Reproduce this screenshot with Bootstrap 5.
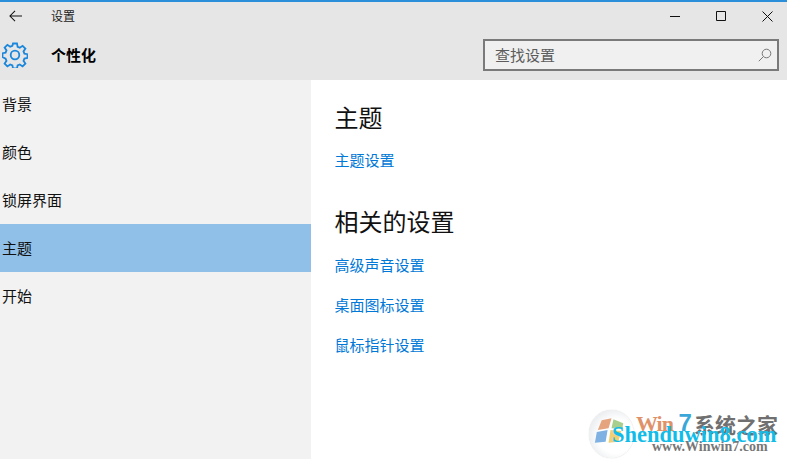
<!DOCTYPE html>
<html lang="zh-CN">
<head>
<meta charset="utf-8">
<title>设置</title>
<link href="https://cdn.jsdelivr.net/npm/bootstrap@5.3.0/dist/css/bootstrap.min.css" rel="stylesheet">
<style>
html,body{height:100%;overflow:hidden}
body{font-family:"Noto Sans CJK SC","Liberation Sans",sans-serif;background:#fff;color:#000;position:relative}
.app-head{background:#e6e6e6;border-top:2px solid #2b90d9;height:80px;flex:none}
.title-row{height:28px;padding-left:9px}
.title-row .ttl{font-size:12px;margin-left:29px;color:#222}
.win-btns{margin-left:auto;gap:36px;padding-right:14px}
.page-row{height:50px;padding-right:8px;padding-left:2px}
.page-name{font-size:15px;font-weight:700;margin-left:23px;line-height:20px}
.find-box{width:296px;height:32px;margin-left:auto;margin-top:-1px;border:2px solid #7a7a7a;background:#f0f0f0;padding:0 5px 0 10px;font-size:15px;color:#5c5c5c}
.find-box span{line-height:20px}
.body-row{height:379px}
.side-col{width:311px;background:#f2f2f2;flex:none}
.side-item{height:48px;padding-left:2px;font-size:15px;color:#111}
.side-item span{line-height:20px}
.side-item.on{background:#90c0e8}
.main-col{padding:0 0 0 23.5px}
.sec-title{font-size:24px;font-weight:400;line-height:32px;margin:0;color:#111}
.set-link{display:block;font-size:15px;line-height:20px;color:#0078d7;text-decoration:none}
.t1{margin-top:21px}
.l1{margin-top:17px}
.t2{margin-top:35px}
.l2{margin-top:18px}
.l3{margin-top:20px}
.wm{position:absolute;left:588px;top:408px;width:199px;height:51px;pointer-events:none}
.wm-ball{position:absolute;left:1px;top:2px;width:45px;height:48px;border-radius:50%;background:radial-gradient(circle at 60% 55%,#fff 45%,#d9dde2 100%);box-shadow:0 0 1px #bbb}
.wm-a{position:absolute;left:48px;top:3px;font:700 22px/24px "Liberation Serif",serif;color:#df9268;white-space:nowrap;letter-spacing:-1px}
.wm-a b{color:#3aa7d8;font:700 24px/24px "Liberation Sans",sans-serif}
.wm-cn{position:absolute;left:106px;top:4px;font:700 21px/24px "Noto Sans CJK SC",sans-serif;color:#707070;white-space:nowrap}
.wm-b{position:absolute;left:24px;top:15px;font:700 22.500px/24px "Liberation Serif",serif;color:#12bce8;white-space:nowrap}
.wm-c{position:absolute;left:64px;top:32px;font:700 14px/14px "Liberation Serif",serif;color:#777;white-space:nowrap}
</style>
</head>
<body>
<header class="app-head d-flex flex-column">
  <div class="title-row d-flex align-items-center">
    <svg width="13" height="12" viewBox="0 0 14 12" fill="none" stroke="#111" stroke-width="1.1"><path d="M14 6H1M6.500.5 1 6l5.500 5.500"/></svg>
    <span class="ttl">设置</span>
    <div class="win-btns d-flex align-items-center">
      <svg width="10" height="10" viewBox="0 0 10 10" stroke="#111"><path d="M0 5.500h10"/></svg>
      <svg width="10" height="10" viewBox="0 0 10 10" fill="none" stroke="#111"><path d="M.5.500h9v9h-9z"/></svg>
      <svg width="11" height="11" viewBox="0 0 11 11" stroke="#111"><path d="M.5.500l10 10M10.500.500l-10 10"/></svg>
    </div>
  </div>
  <div class="page-row d-flex align-items-center">
    <svg width="26" height="26" viewBox="0 0 26 26" fill="none" stroke="#1a86dc" stroke-width="1.800"><path d="M11 1.500h4l.6 3.300 2.200.9 2.800-1.900 2.800 2.800-1.900 2.800.9 2.200 3.100.6v3.800l-3.100.6-.9 2.200 1.900 2.800-2.800 2.800-2.800-1.900-2.200.9-.6 3.100h-4l-.6-3.100-2.200-.9-2.800 1.900-2.800-2.800 1.900-2.800-.9-2.200L.500 15v-3.800l3.100-.6.9-2.200L2.600 5.600l2.800-2.800 2.800 1.900 2.200-.9z"/><circle cx="13" cy="13" r="4.300"/></svg>
    <span class="page-name">个性化</span>
    <div class="find-box d-flex align-items-center justify-content-between">
      <span>查找设置</span>
      <svg width="14" height="14" viewBox="0 0 14 14" fill="none" stroke="#777"><circle cx="8.500" cy="5.500" r="4.300"/><path d="M5.500 8.500.8 13.200"/></svg>
    </div>
  </div>
</header>
<div class="body-row d-flex">
  <nav class="side-col d-flex flex-column">
    <div class="side-item d-flex align-items-center"><span>背景</span></div>
    <div class="side-item d-flex align-items-center"><span>颜色</span></div>
    <div class="side-item d-flex align-items-center"><span>锁屏界面</span></div>
    <div class="side-item on d-flex align-items-center"><span>主题</span></div>
    <div class="side-item d-flex align-items-center"><span>开始</span></div>
  </nav>
  <main class="main-col flex-grow-1">
    <h2 class="sec-title t1">主题</h2>
    <a class="set-link l1" href="#">主题设置</a>
    <h2 class="sec-title t2">相关的设置</h2>
    <a class="set-link l2" href="#">高级声音设置</a>
    <a class="set-link l3" href="#">桌面图标设置</a>
    <a class="set-link l3" href="#">鼠标指针设置</a>
  </main>
</div>
<div class="wm">
  <div class="wm-ball"><svg width="45" height="48" viewBox="0 0 46 46"><path d="M13 9l10-2-3 10-11 2z" fill="#e6a47e"/><path d="M8 21l11-2-2 12-11 1z" fill="#7fb2e2"/><path d="M22 19l11 1-3 11-10 1z" fill="#f1cf74"/><path d="M25 8l10 4-1 6-11-1z" fill="#a9cf8e"/></svg></div>
  <div class="wm-a">Win<b> 7</b></div>
  <div class="wm-cn">系统之家</div>
  <div class="wm-c">www.Winwin7.com</div>
  <div class="wm-b">Shenduwin8.com</div>
</div>
<script src="https://cdn.jsdelivr.net/npm/bootstrap@5.3.0/dist/js/bootstrap.bundle.min.js"></script>
</body>
</html>
